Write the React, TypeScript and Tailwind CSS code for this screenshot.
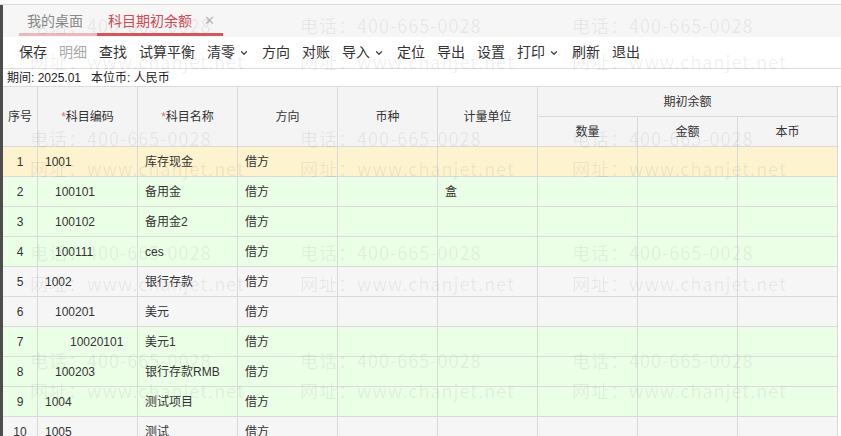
import React from "react";
import { ChevronDown } from "lucide-react";

type Row = { n: number; code: string; lvl: number; name: string; bg: string; unit?: string };

const rows: Row[] = [
  { n: 1, code: "1001", lvl: 1, name: "库存现金", bg: "bg-[#fdf3cf]" },
  { n: 2, code: "100101", lvl: 2, name: "备用金", bg: "bg-[#ebffe7]", unit: "盒" },
  { n: 3, code: "100102", lvl: 2, name: "备用金2", bg: "bg-[#ebffe7]" },
  { n: 4, code: "100111", lvl: 2, name: "ces", bg: "bg-[#ebffe7]" },
  { n: 5, code: "1002", lvl: 1, name: "银行存款", bg: "bg-[#f7f6f7]" },
  { n: 6, code: "100201", lvl: 2, name: "美元", bg: "bg-[#f7f6f7]" },
  { n: 7, code: "10020101", lvl: 3, name: "美元1", bg: "bg-[#ebffe7]" },
  { n: 8, code: "100203", lvl: 2, name: "银行存款RMB", bg: "bg-[#ebffe7]" },
  { n: 9, code: "1004", lvl: 1, name: "测试项目", bg: "bg-[#ebffe7]" },
  { n: 10, code: "1005", lvl: 1, name: "测试", bg: "bg-[#f7f6f7]" },
];

const tools: { t: string; dis?: boolean; dd?: boolean }[] = [
  { t: "保存" },
  { t: "明细", dis: true },
  { t: "查找" },
  { t: "试算平衡" },
  { t: "清零", dd: true },
  { t: "方向" },
  { t: "对账" },
  { t: "导入", dd: true },
  { t: "定位" },
  { t: "导出" },
  { t: "设置" },
  { t: "打印", dd: true },
  { t: "刷新" },
  { t: "退出" },
];

const wmY = [
  [12, 48],
  [125, 155],
  [239, 270],
  [347, 377],
];
const wmX = [30, 300, 572];

function Star() {
  return <span className="text-[#d0707a]">*</span>;
}

export default function App() {
  return (
    <div className="relative w-[841px] h-[436px] overflow-hidden bg-white font-['Liberation_Sans','Noto_Sans_CJK_SC',sans-serif] text-[#333]">
      <div className="h-[5px] bg-[#fbfbfb] border-b border-[#dcdcdc]" />
      <div className="flex">
        <div className="w-[3px] self-stretch bg-[#4d4d4d]" />
        <div className="flex-1 flex flex-col">
          {/* tabs */}
          <div className="h-[32px] bg-[#f6f6f6] flex items-end pl-[16px]">
            <div className="relative h-full flex items-center px-[8px] text-[14px] text-[#8a8a8a] w-[78px]">
              我的桌面
              <div className="absolute left-0 right-0 bottom-[1px] h-[3px] bg-[#eab8bd]" />
            </div>
            <div className="relative h-full flex items-center pl-[11px] w-[126px] text-[14px] text-[#d24a55]">
              科目期初余额
              <span className="ml-[12px] text-[13px] text-[#b5b5b5]">✕</span>
              <div className="absolute left-0 right-0 bottom-[1px] h-[3px] bg-[#d6545e]" />
            </div>
          </div>
          {/* toolbar */}
          <div className="h-[32px] bg-white border-b border-[#dcdcdc] flex items-center pl-[16px] gap-[12px] text-[14px]">
            {tools.map((x) => (
              <div key={x.t} className={`flex items-center ${x.dis ? "text-[#a8a8a8]" : "text-[#333]"}`}>
                {x.t}
                {x.dd && <ChevronDown size={10} strokeWidth={3} className="ml-[4px] mr-[1px] text-[#444]" />}
              </div>
            ))}
          </div>
          {/* info */}
          <div className="h-[18px] flex items-center pl-[4px] text-[12px] text-[#222] border-b border-[#dcdcdc]">
            <span>期间: 2025.01</span>
            <span className="ml-[10px]">本位币: 人民币</span>
          </div>
          {/* table */}
          <div className="w-[835px] text-[12px]">
            <div className="grid grid-cols-[35px_repeat(8,100px)] grid-rows-[30px_30px] bg-[#f4f4f4] text-[#333]">
              <div className="row-span-2 flex items-center justify-center border-r border-b border-[#d9d9d9]">序号</div>
              <div className="row-span-2 flex items-center justify-center border-r border-b border-[#d9d9d9]">
                <Star />科目编码
              </div>
              <div className="row-span-2 flex items-center justify-center border-r border-b border-[#d9d9d9]">
                <Star />科目名称
              </div>
              <div className="row-span-2 flex items-center justify-center border-r border-b border-[#d9d9d9]">方向</div>
              <div className="row-span-2 flex items-center justify-center border-r border-b border-[#d9d9d9]">币种</div>
              <div className="row-span-2 flex items-center justify-center border-r border-b border-[#d9d9d9]">计量单位</div>
              <div className="col-span-3 flex items-center justify-center border-r border-b border-[#d9d9d9]">期初余额</div>
              <div className="flex items-center justify-center border-r border-b border-[#d9d9d9]">数量</div>
              <div className="flex items-center justify-center border-r border-b border-[#d9d9d9]">金额</div>
              <div className="flex items-center justify-center border-r border-b border-[#d9d9d9]">本币</div>
            </div>
            {rows.map((r) => (
              <div key={r.n} className={`grid grid-cols-[35px_repeat(8,100px)] h-[30px] ${r.bg}`}>
                <div className="flex items-center justify-center border-r border-b border-[#d9d9d9]">{r.n}</div>
                <div
                  className={`flex items-center border-r border-b border-[#d9d9d9] ${
                    r.lvl === 1 ? "pl-[7px]" : r.lvl === 2 ? "pl-[17px]" : "pl-[32px]"
                  }`}
                >
                  {r.code}
                </div>
                <div className="flex items-center pl-[7px] border-r border-b border-[#d9d9d9]">{r.name}</div>
                <div className="flex items-center pl-[7px] border-r border-b border-[#d9d9d9]">借方</div>
                <div className="border-r border-b border-[#d9d9d9]" />
                <div className="flex items-center pl-[7px] border-r border-b border-[#d9d9d9]">{r.unit ?? ""}</div>
                <div className="border-r border-b border-[#d9d9d9]" />
                <div className="border-r border-b border-[#d9d9d9]" />
                <div className="border-r border-b border-[#d9d9d9]" />
              </div>
            ))}
          </div>
        </div>
      </div>
      {/* watermark */}
      <div className="pointer-events-none absolute inset-0 font-['Noto_Sans_CJK_SC',sans-serif] text-[18px] tracking-[1px] text-[rgba(0,0,0,0.07)] leading-[26px]">
        {wmY.map(([py, uy], i) =>
          wmX.map((x) => (
            <React.Fragment key={`${i}-${x}`}>
              <div className="absolute whitespace-nowrap" style={{ left: x, top: py }}>
                电话：400-665-0028
              </div>
              <div className="absolute whitespace-nowrap" style={{ left: x, top: uy }}>
                网址：www.chanjet.net
              </div>
            </React.Fragment>
          ))
        )}
      </div>
    </div>
  );
}
